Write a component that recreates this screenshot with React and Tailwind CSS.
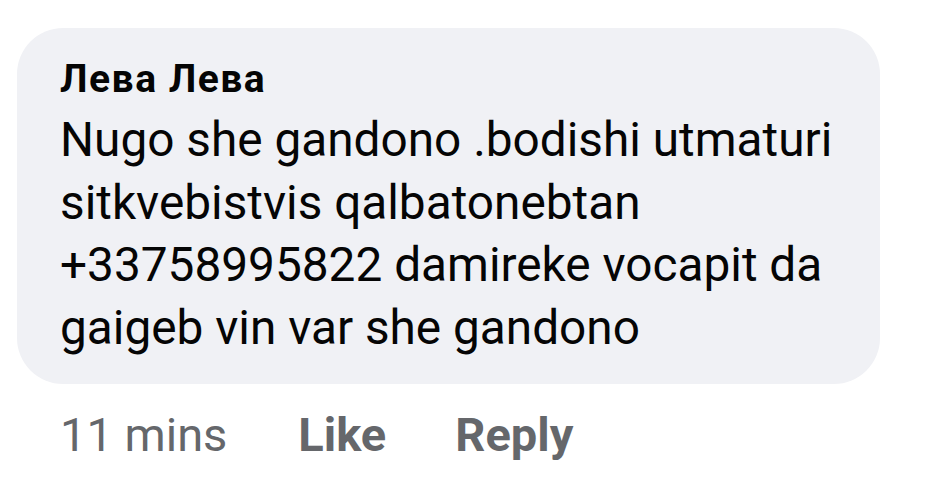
// CommentCard.jsx

const App = () => {
  return (
    <div
      className="w-[929px] h-[498px] bg-white overflow-hidden"
      style={{ fontFamily: 'Roboto, "Noto Sans", Arial, sans-serif' }}
    >
      {/* bubble */}
      <div className="ml-[17px] mt-[28px] w-[863px] h-[356px] rounded-[46px] bg-[#f0f1f5] pl-[43px] pr-6 pt-[31px]">
        <div className="text-[39px] leading-[40px] font-bold tracking-[1.5px] text-[#050505]">
          Лева Лева
        </div>
        <p className="mt-[10px] text-[47.75px] leading-[62.5px] text-[#050505]">
          Nugo she gandono .bodishi utmaturi
          <br />
          sitkvebistvis qalbatonebtan
          <br />
          +33758995822 damireke vocapit da
          <br />
          gaigeb vin var she gandono
        </p>
      </div>

      {/* actions */}
      <div className="flex items-center pl-[60px] mt-[25px] text-[47px] leading-[52px] text-[#65676b]">
        <span>11 mins</span>
        <span className="ml-[71px] font-bold">Like</span>
        <span className="ml-[69px] font-bold">Reply</span>
      </div>
    </div>
  );
};

export default App;
